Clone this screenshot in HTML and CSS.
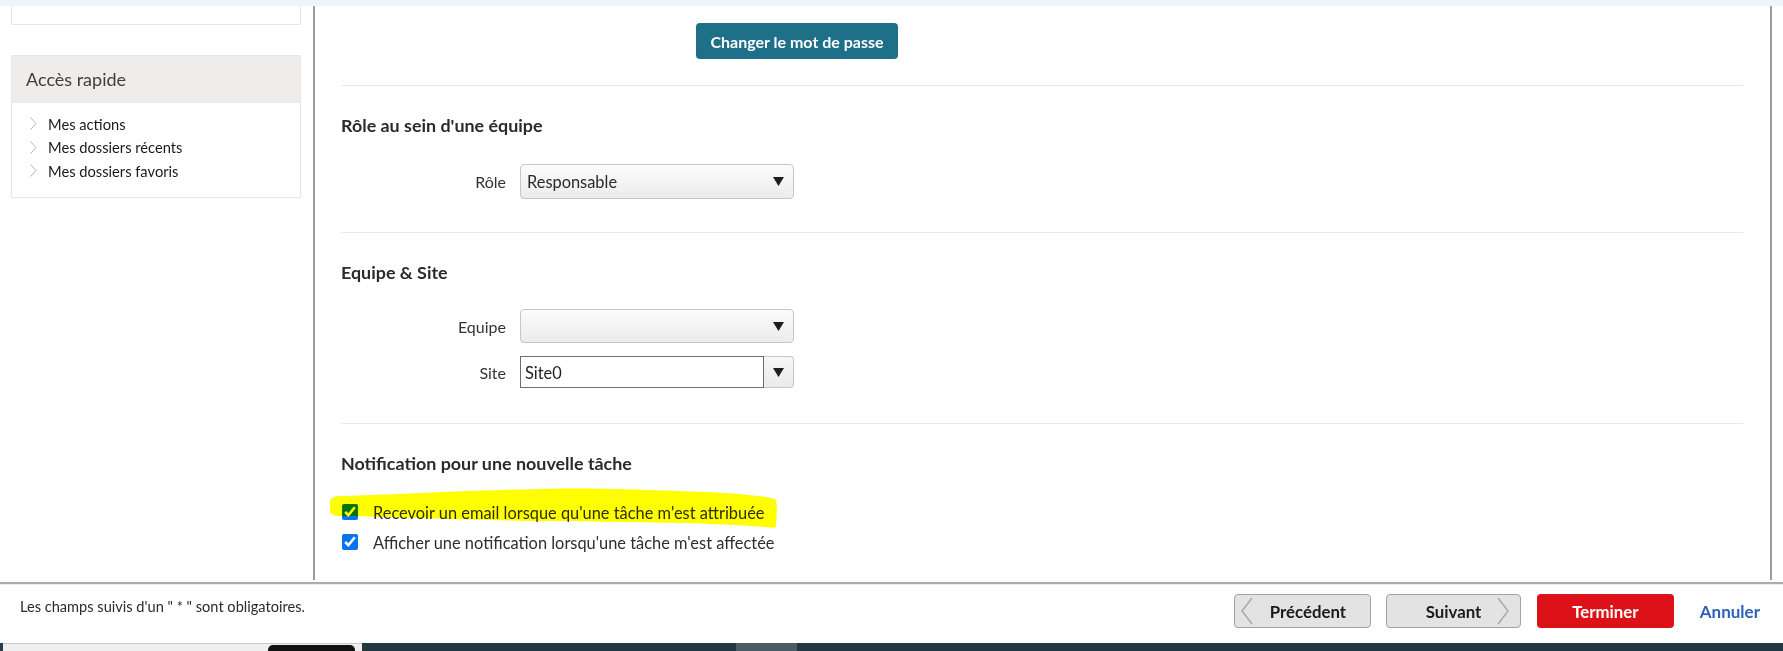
FILE: index.html
```html
<!DOCTYPE html>
<html lang="fr">
<head>
<meta charset="utf-8">
<title>Profil</title>
<link rel="stylesheet" href="styles.css">
</head>
<body>
<div class="topband"></div>
<div class="workspace">
  <aside class="sidebar">
    <div class="card-stub"></div>
    <div class="quick">
      <div class="quick-head">Accès rapide</div>
      <ul class="quick-list">
        <li><svg class="chev" viewBox="0 0 7 13" width="7" height="13"><polyline points="0.5,0.5 6,6.5 0.5,12.5"/></svg><span>Mes actions</span></li>
        <li><svg class="chev" viewBox="0 0 7 13" width="7" height="13"><polyline points="0.5,0.5 6,6.5 0.5,12.5"/></svg><span>Mes dossiers récents</span></li>
        <li><svg class="chev" viewBox="0 0 7 13" width="7" height="13"><polyline points="0.5,0.5 6,6.5 0.5,12.5"/></svg><span>Mes dossiers favoris</span></li>
      </ul>
    </div>
  </aside>

  <main class="main">
    <div class="pw-row"><button class="btn-teal" type="button">Changer le mot de passe</button></div>
    <div class="sep"></div>

    <section class="block">
      <h2 class="block-title">Rôle au sein d'une équipe</h2>
      <div class="field field-role">
        <label class="field-label">Rôle</label>
        <div class="select">
          <span class="select-value">Responsable</span>
          <svg class="caret" viewBox="0 0 11 9" width="11" height="9"><polygon points="0,0 11,0 5.5,9"/></svg>
        </div>
      </div>
    </section>
    <div class="sep sep-2"></div>

    <section class="block">
      <h2 class="block-title">Equipe &amp; Site</h2>
      <div class="field field-team">
        <label class="field-label">Equipe</label>
        <div class="select select-team">
          <span class="select-value"></span>
          <svg class="caret" viewBox="0 0 11 9" width="11" height="9"><polygon points="0,0 11,0 5.5,9"/></svg>
        </div>
      </div>
      <div class="field field-site">
        <label class="field-label">Site</label>
        <div class="combo">
          <span class="combo-input">Site0</span>
          <span class="combo-btn"><svg class="caret" viewBox="0 0 11 9" width="11" height="9"><polygon points="0,0 11,0 5.5,9"/></svg></span>
        </div>
      </div>
    </section>
    <div class="sep sep-3"></div>

    <section class="block">
      <h2 class="block-title">Notification pour une nouvelle tâche</h2>
      <div class="checks">
        <label class="check"><input type="checkbox" checked><span>Recevoir un email lorsque qu'une tâche m'est attribuée</span></label>
        <label class="check"><input type="checkbox" checked><span>Afficher une notification lorsqu'une tâche m'est affectée</span></label>
        <svg class="highlight" viewBox="0 0 450 44" width="450" height="44" preserveAspectRatio="none"><path d="M0,15 C1,11 6,10 12,10 C40,9 70,8 90,7 C130,5 170,4 210,3 C250,2 290,3 318,4 C350,5 385,6 408,8 C430,10 442,11 446,14 L447,22 L446,41 C443,42 440,42 436,41 C410,39 385,38 356,37 C300,36 250,35 200,35 C160,34 120,33 85,32 C55,31 30,30 10,30 C4,30 1,28 0,26 Z"/></svg>
      </div>
    </section>
  </main>
</div>

<footer class="footer">
  <p class="footer-note">Les champs suivis d'un " * " sont obligatoires.</p>
  <div class="actions">
    <button class="btn-nav btn-prev" type="button"><svg class="nav-chev" viewBox="0 0 12 28" width="12" height="28"><polyline points="11,1 1,14 11,27"/></svg><span>Précédent</span></button>
    <button class="btn-nav btn-next" type="button"><span>Suivant</span><svg class="nav-chev" viewBox="0 0 12 28" width="12" height="28"><polyline points="1,1 11,14 1,27"/></svg></button>
    <button class="btn-finish" type="button">Terminer</button>
    <a class="link-cancel" href="#">Annuler</a>
  </div>
</footer>

<div class="taskbar">
  <div class="tb-edge"></div>
  <div class="tb-light"><div class="tb-pill"></div></div>
  <div class="tb-dark"><div class="tb-active"></div></div>
</div>
</body>
</html>
```

FILE: styles.css
```css
* { box-sizing: border-box; }

html, body {
  margin: 0;
  padding: 0;
}

body {
  width: 1783px;
  height: 651px;
  overflow: hidden;
  background: #ffffff;
  font-family: Lato, "Open Sans", "Liberation Sans", sans-serif;
  color: #333333;
}

.topband {
  height: 6px;
  background: #edf4fb;
}

.workspace {
  display: flex;
  height: 576px;
}

/* Sidebar */
.sidebar {
  width: 313px;
  flex: none;
  padding-left: 11px;
}

.card-stub {
  width: 290px;
  height: 19px;
  border: 1px solid #e7e7e7;
  border-top: none;
}

.quick {
  width: 290px;
  margin-top: 30px;
  border: 1px solid #e7e7e7;
}

.quick-head {
  height: 47px;
  background: #efedeb;
  padding-left: 14px;
  font-size: 18px;
  line-height: 47px;
  color: #3f3f3f;
}

.quick-list {
  list-style: none;
  margin: 0;
  padding: 9px 0 14px 18px;
}

.quick-list li {
  display: flex;
  align-items: center;
  height: 23.5px;
  font-size: 14.7px;
  color: #1a1a1a;
}

.chev {
  flex: none;
  margin-right: 11px;
  fill: none;
  stroke: #b4b4b4;
  stroke-width: 1;
}

/* Main column */
.main {
  flex: none;
  width: 1459px;
  border-left: 2px solid #9b9b9b;
  border-right: 2px solid #9b9b9b;
  padding: 17px 27px 0 26px;
  height: 574px;
}

.pw-row {
  padding-left: 355px;
}

.btn-teal {
  height: 36px;
  width: 202px;
  border: none;
  border-radius: 4px;
  background: #1e6f88;
  color: #ffffff;
  font-family: Lato, "Open Sans", sans-serif;
  font-weight: 700;
  font-size: 16px;
  padding: 0;
}

.sep {
  height: 1px;
  background: #e9e9e9;
  margin-top: 26px;
}

.sep-2 { margin-top: 33px; }
.sep-3 { margin-top: 35px; }

.block-title {
  margin: 29px 0 0;
  font-size: 17.9px;
  line-height: 20px;
  font-weight: 700;
  color: #2b2b2b;
}

.field {
  display: flex;
  align-items: center;
  gap: 14px;
}

.field-role { margin-top: 29px; }
.field-team { margin-top: 27px; }
.field-site { margin-top: 13px; }

.field-label {
  width: 165px;
  text-align: right;
  font-size: 16px;
  color: #333333;
}

.select {
  display: flex;
  align-items: center;
  justify-content: space-between;
  width: 274px;
  height: 35px;
  padding: 0 9px 0 6px;
  border: 1px solid #c6c6c6;
  border-radius: 4px;
  background: linear-gradient(#fbfbfb, #ececec);
  font-size: 16.4px;
  color: #2a2a2a;
}

.select-team { height: 34px; }

.caret {
  flex: none;
  fill: #1e1e1e;
}

.combo {
  display: flex;
  width: 274px;
  height: 32px;
}

.combo-input {
  display: flex;
  align-items: center;
  width: 244px;
  border: 1px solid #6e6e6e;
  padding-left: 4px;
  font-size: 16.4px;
  color: #222222;
  background: #ffffff;
}

.combo-btn {
  display: flex;
  align-items: center;
  justify-content: center;
  width: 30px;
  border: 1px solid #c6c6c6;
  border-left: none;
  border-radius: 0 4px 4px 0;
  background: linear-gradient(#f7f7f7, #eaeaea);
}

.checks {
  position: relative;
  margin-top: 24px;
}

.check {
  display: flex;
  align-items: center;
  height: 30px;
  font-size: 16.4px;
  color: #2e2e2e;
}

.check input {
  width: 16px;
  height: 16px;
  margin: 0 15px 0 1px;
  accent-color: #0a73ef;
}

.highlight {
  position: absolute;
  left: -11px;
  top: -11px;
  fill: #ffff00;
  mix-blend-mode: multiply;
  pointer-events: none;
}

/* Footer */
.footer {
  display: flex;
  align-items: flex-start;
  height: 61px;
  border-top: 2px solid #adadad;
  box-shadow: inset 0 1px 0 #f6e9ef;
  padding: 10px 23px 0 20px;
}

.footer-note {
  margin: 3px 0 0;
  font-size: 14.6px;
  line-height: 20px;
  color: #2a2a2a;
}

.actions {
  margin-left: auto;
  display: flex;
  align-items: center;
}

.btn-nav {
  display: flex;
  align-items: center;
  height: 34px;
  width: 137px;
  border: 1px solid #a3a3a3;
  border-radius: 4px;
  background: #e3e3e3;
  font-family: Lato, "Open Sans", sans-serif;
  font-weight: 700;
  font-size: 16.8px;
  color: #1b1b1b;
  padding: 0;
}

.nav-chev {
  flex: none;
  fill: none;
  stroke: #a9a9a9;
  stroke-width: 1.5;
}

.btn-prev { padding-left: 6px; }
.btn-prev .nav-chev { margin-right: 17px; }

.btn-next {
  width: 135px;
  margin-left: 15px;
  padding-left: 39px;
}
.btn-next .nav-chev { margin-left: 16px; }

.btn-finish {
  height: 34px;
  width: 137px;
  margin-left: 16px;
  border: none;
  border-radius: 4px;
  background: #dd1219;
  color: #ffffff;
  font-family: Lato, "Open Sans", sans-serif;
  font-weight: 700;
  font-size: 16.8px;
}

.link-cancel {
  margin-left: 26px;
  font-size: 17px;
  font-weight: 700;
  color: #2f5fbb;
  text-decoration: none;
}

/* Taskbar strip */
.taskbar {
  display: flex;
  height: 8px;
}

.tb-edge {
  width: 3px;
  background: #2a3b45;
}

.tb-light {
  width: 359px;
  background: #efefef;
  border-top: 1px solid #c9c9c9;
  padding-left: 265px;
  padding-top: 1px;
}

.tb-pill {
  width: 87px;
  height: 7px;
  background: #111111;
  border-radius: 5px 5px 0 0;
}

.tb-dark {
  flex: 1;
  background: #24363f;
  padding-left: 374px;
}

.tb-active {
  width: 61px;
  height: 8px;
  background: #4c5c65;
}
```
